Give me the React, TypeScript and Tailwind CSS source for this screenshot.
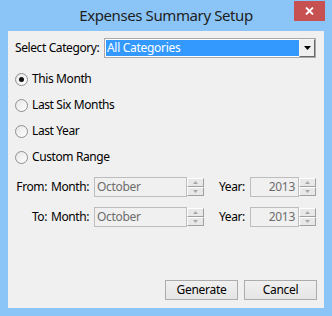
import React from "react";

const font = { fontFamily: '"Noto Sans", "Segoe UI", sans-serif' };

function Radio({ checked, label }: { checked?: boolean; label: string }) {
  return (
    <div className="flex h-[26px] items-center">
      <div className="flex h-[13px] w-[13px] items-center justify-center rounded-full border border-[#8f8f8f] bg-gradient-to-br from-[#e6e6e6] to-[#ffffff]">
        {checked && <div className="h-[5px] w-[5px] rounded-full bg-[#111]" />}
      </div>
      <span className="ml-[4px] whitespace-nowrap text-[12px] tracking-[-0.4px] text-black">{label}</span>
    </div>
  );
}

function SpinBtn({ up }: { up?: boolean }) {
  return (
    <div className="flex h-[9px] w-[17px] items-center justify-center border border-t-white border-l-white border-r-[#a0a0a0] border-b-[#a0a0a0] bg-[#e8e8e8]">
      <svg width="5" height="3" viewBox="0 0 5 3">
        {up ? <path d="M0 3 L2.5 0 L5 3 Z" fill="#a8a8a8" /> : <path d="M0 0 L2.5 3 L5 0 Z" fill="#a8a8a8" />}
      </svg>
    </div>
  );
}

function Spinner({ value, width, right }: { value: string; width: string; right?: boolean }) {
  return (
    <div className={`flex h-[20px] ${width}`}>
      <div
        className={`flex flex-1 items-center border border-[#bdbdbd] bg-[#f0f0f0] text-[12px] tracking-[-0.3px] text-[#6d6d6d] ${
          right ? "justify-end pr-[3px]" : "pl-[2px]"
        }`}
      >
        {value}
      </div>
      <div className="flex flex-col justify-center gap-0">
        <SpinBtn up />
        <SpinBtn />
      </div>
    </div>
  );
}

function DateRow({ label, mt }: { label: string; mt: string }) {
  return (
    <div className={`flex h-[20px] items-center whitespace-nowrap text-[12px] tracking-[-0.4px] text-black ${mt}`}>
      <div className="w-[36px] pr-[4px] text-right">{label}</div>
      <div className="w-[43px]">Month:</div>
      <Spinner value="October" width="w-[110px]" />
      <div className="w-[15px]" />
      <div className="w-[31px]">Year:</div>
      <Spinner value="2013" width="w-[66px]" right />
    </div>
  );
}

function Button({ label }: { label: string }) {
  return (
    <div className="flex h-[20px] w-[73px] items-center justify-center border border-[#acacac] bg-gradient-to-b from-[#f0f0f0] to-[#e5e5e5] text-[12px] tracking-[-0.3px] text-black">
      {label}
    </div>
  );
}

export default function App() {
  return (
    <div className="flex h-[316px] w-[332px] flex-col bg-[#8bc5f7]" style={font}>
      <div className="grid h-[31px] grid-cols-[1fr_auto_1fr]">
        <div />
        <div className="flex items-center whitespace-nowrap text-[15px] tracking-[-0.4px] text-[#1e1e1e]">
          Expenses Summary Setup
        </div>
        <div className="flex items-start justify-end pr-[7px]">
          <div className="mt-[1px] flex h-[20px] w-[31px] items-center justify-center bg-[#c75050]">
            <svg width="9" height="8" viewBox="0 0 9 8">
              <path d="M1 0.5 L8 7.5 M8 0.5 L1 7.5" stroke="white" strokeWidth="1.8" />
            </svg>
          </div>
        </div>
      </div>
      <div className="mx-[8px] mb-[8px] flex flex-1 flex-col bg-[#f0f0f0] px-[7px] pt-[7px] pb-[8px]">
        <div className="flex h-[20px] items-center">
          <div className="w-[89px] whitespace-nowrap text-[12px] tracking-[-0.4px] text-black">Select Category:</div>
          <div className="flex h-[20px] w-[212px] items-center border border-[#a9a9a9] bg-white pl-[1px]">
            <div className="flex h-[16px] flex-1 items-center bg-[#3399ff] pl-[1px] text-[12px] tracking-[-0.3px] text-white">
              All Categories
            </div>
            <div className="flex h-[18px] w-[16px] items-center justify-center border border-t-[#f8f8f8] border-l-[#f8f8f8] border-r-[#696969] border-b-[#696969] bg-[#efefef]">
              <svg width="7" height="4" viewBox="0 0 7 4">
                <path d="M0 0 L7 0 L3.5 4 Z" fill="#000" />
              </svg>
            </div>
          </div>
        </div>
        <div className="mt-[8px] flex flex-col">
          <Radio checked label="This Month" />
          <Radio label="Last Six Months" />
          <Radio label="Last Year" />
          <Radio label="Custom Range" />
        </div>
        <DateRow label="From:" mt="mt-[7px]" />
        <DateRow label="To:" mt="mt-[10px]" />
        <div className="flex-1" />
        <div className="flex justify-end gap-[6px]">
          <Button label="Generate" />
          <Button label="Cancel" />
        </div>
      </div>
    </div>
  );
}
